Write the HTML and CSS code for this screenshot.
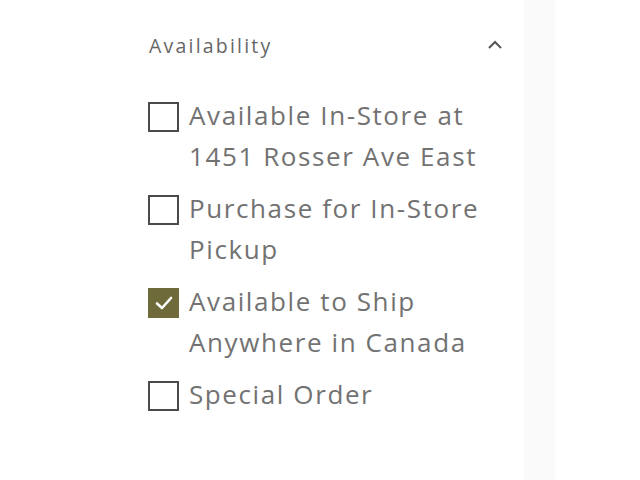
FILE: index.html
```html
<!DOCTYPE html>
<html>
<head>
<meta charset="utf-8">
<link rel="stylesheet" href="styles.css">
</head>
<body>
<div class="page">
  <aside class="filters">
    <div class="filter-head">
      <span class="filter-title">Availability</span>
      <svg class="chevron" width="16" height="10" viewBox="0 0 16 10"><path d="M2 8 L8 2 L14 8" fill="none" stroke="#555" stroke-width="2"/></svg>
    </div>
    <ul class="options">
      <li class="option"><span class="box"></span><span class="label">Available In-Store at 1451 Rosser Ave East</span></li>
      <li class="option"><span class="box"></span><span class="label">Purchase for In-Store Pickup</span></li>
      <li class="option"><span class="box checked"><svg width="20" height="16" viewBox="0 0 20 16"><path d="M3 8.5 L8 13 L17 3" fill="none" stroke="#fff" stroke-width="2.6" stroke-linecap="round" stroke-linejoin="round"/></svg></span><span class="label">Available to Ship Anywhere in Canada</span></li>
      <li class="option"><span class="box"></span><span class="label">Special Order</span></li>
    </ul>
  </aside>
  <div class="strip"></div>
  <div class="rest"></div>
</div>
</body>
</html>
```
FILE: styles.css
```css
html, body { margin: 0; padding: 0; background: #fff; }
body { font-family: "Open Sans", "Noto Sans", sans-serif; }
.page { display: flex; height: 480px; }
.filters { flex: none; width: 356px; padding: 30px 20px 0 148px; }
.filter-head { display: flex; justify-content: space-between; align-items: center; height: 30px; }
.filter-title { font-size: 19.5px; color: #666; padding-left: 1px; letter-spacing: 2.2px; }
.chevron { margin-right: 1px; }
.options { list-style: none; margin: 41px 0 0; padding: 0; display: flex; flex-direction: column; gap: 11px; }
.option { display: flex; align-items: flex-start; margin-bottom: 6px; }
.box { width: 31px; height: 30px; border: 2px solid #4a4a4a; box-sizing: border-box; flex: none; margin-top: 1px; margin-right: 10px; display: flex; align-items: center; justify-content: center; }
.box.checked { background: #6e6a3a; border-color: #6e6a3a; }
.label { font-size: 26px; line-height: 41px; color: #727272; margin-top: -6px; width: 310px; letter-spacing: 1.6px; }
.strip { width: 31px; background: #fafafa; flex: none; }
.rest { flex: 1; }
```
